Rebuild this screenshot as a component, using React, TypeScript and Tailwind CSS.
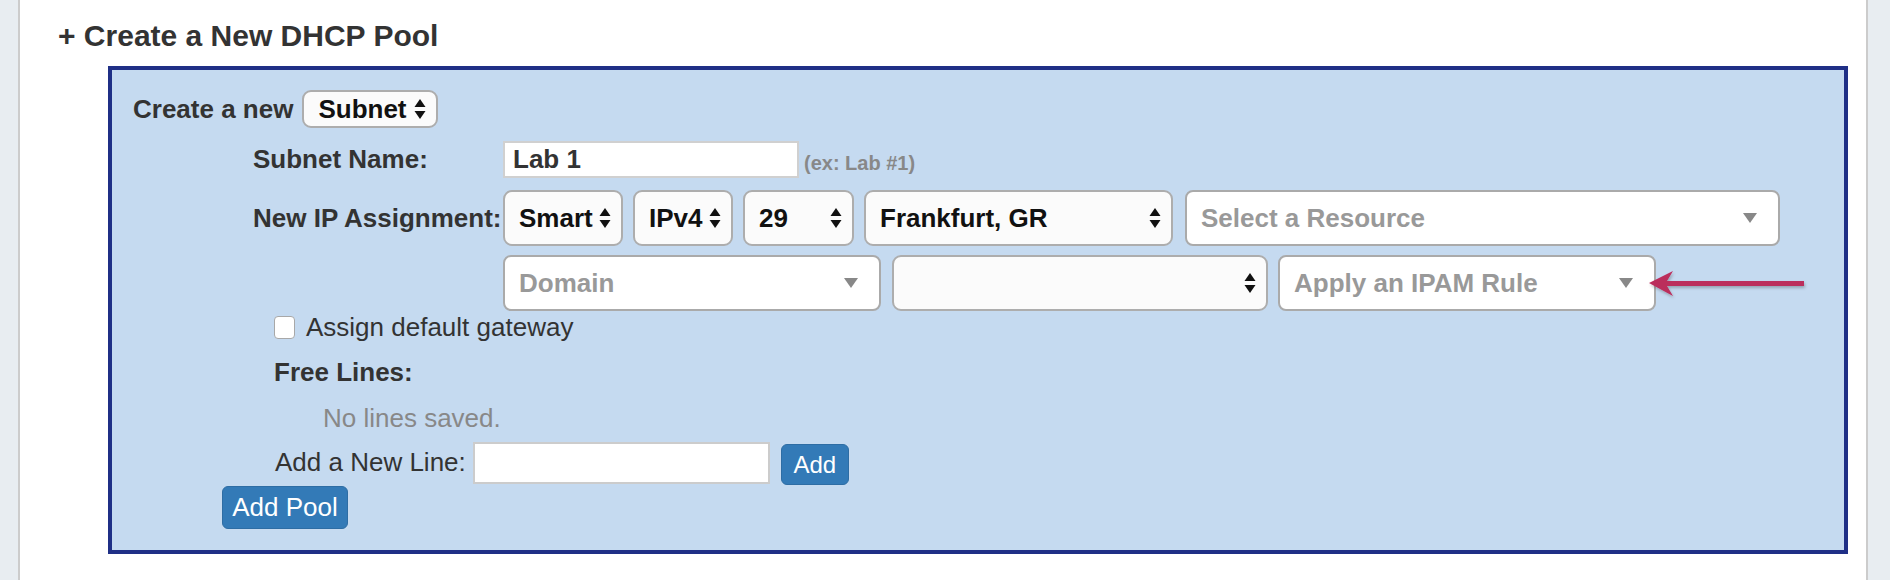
import type { ReactNode } from "react";

function UpDown() {
  return (
    <svg width="12" height="22" viewBox="0 0 12 22" className="shrink-0">
      <path d="M6 1 L11.5 9 H0.5 Z" fill="#111" />
      <path d="M6 21 L11.5 13 H0.5 Z" fill="#111" />
    </svg>
  );
}

function Caret() {
  return (
    <svg width="16" height="10" viewBox="0 0 16 10" className="shrink-0">
      <path d="M1 0 H15 L8 10 Z" fill="#888" />
    </svg>
  );
}

// native-looking select with stacked arrows
function NativeSelect({ children, className }: { children?: ReactNode; className: string }) {
  return (
    <div
      className={`flex items-center justify-between rounded-[9px] border-2 border-[#adadad] bg-[#fbfbfb] pl-[14px] pr-[10px] font-bold text-[26px] text-[#111] ${className}`}
    >
      <span>{children}</span>
      <UpDown />
    </div>
  );
}

// select2 style box with placeholder
function ComboBox({ placeholder, className }: { placeholder: string; className: string }) {
  return (
    <div
      className={`flex items-center justify-between rounded-[8px] border-2 border-[#aaa] bg-white pl-[14px] pr-[20px] font-bold text-[26px] text-[#999] ${className}`}
    >
      <span>{placeholder}</span>
      <Caret />
    </div>
  );
}

export default function App() {
  return (
    <div className="flex h-[580px] w-[1890px] font-['Liberation_Sans',Arial,sans-serif] text-[#333]">
      <div className="w-[20px] shrink-0 border-r-2 border-[#cccccc] bg-[#e8edf1]" />

      <div className="flex-1 bg-white pl-[38px] pr-[18px] pt-[18px]">
        <h2 className="text-[30px] font-bold leading-[36px] text-[#333]">+ Create a New DHCP Pool</h2>

        <div className="relative ml-[50px] mt-[12px] border-4 border-[#1f2f86] bg-[#c5daf0] pt-[20px] pb-[21px]">
          {/* Create a new */}
          <div className="flex h-[38px] items-center pl-[21px]">
            <span className="text-[26px] font-bold">Create a new</span>
            <NativeSelect className="ml-[9px] h-[38px] w-[136px] rounded-[8px] pl-[12px] pr-[8px]">Subnet</NativeSelect>
          </div>

          {/* Subnet Name */}
          <div className="mt-[13px] flex h-[37px] items-center pl-[141px]">
            <span className="w-[250px] text-[26px] font-bold">Subnet Name:</span>
            <div className="flex h-[37px] w-[296px] items-center border-2 border-[#d0d0d0] bg-white pl-[8px] text-[26px] font-bold text-[#333]">
              Lab 1
            </div>
            <span className="ml-[5px] mt-[6px] text-[20px] font-bold text-[#888]">(ex: Lab #1)</span>
          </div>

          {/* New IP Assignment */}
          <div className="mt-[12px] flex h-[56px] items-center pl-[141px]">
            <span className="w-[250px] text-[26px] font-bold">New IP Assignment:</span>
            <div className="flex gap-[10px]">
              <NativeSelect className="h-[56px] w-[120px]">Smart</NativeSelect>
              <NativeSelect className="h-[56px] w-[100px]">IPv4</NativeSelect>
              <NativeSelect className="h-[56px] w-[111px]">29</NativeSelect>
              <NativeSelect className="h-[56px] w-[309px]">Frankfurt, GR</NativeSelect>
              <ComboBox placeholder="Select a Resource" className="ml-[2px] h-[56px] w-[595px]" />
            </div>
          </div>

          <div className="mt-[9px] flex h-[56px] gap-[10px] pl-[391px]">
            <ComboBox placeholder="Domain" className="h-[56px] w-[378px]" />
            <NativeSelect className="ml-[1px] h-[56px] w-[376px] bg-[#f7f7f7]" />
            <ComboBox placeholder="Apply an IPAM Rule" className="h-[56px] w-[378px]" />
          </div>

          {/* gateway */}
          <div className="mt-[2px] flex h-[28px] items-center pl-[162px]">
            <span className="h-[23px] w-[21px] rounded-[4px] border border-[#a8a8a8] bg-white" />
            <span className="ml-[11px] text-[26px]">Assign default gateway</span>
          </div>

          <div className="mt-[17px] flex h-[28px] items-center pl-[162px] text-[26px] font-bold">Free Lines:</div>

          <div className="mt-[18px] flex h-[28px] items-center pl-[211px] text-[26px] text-[#888]">No lines saved.</div>

          <div className="mt-[8px] flex h-[45px] items-center pl-[163px]">
            <span className="text-[26px]">Add a New Line:</span>
            <div className="ml-[7px] h-[42px] w-[297px] border-2 border-[#cccccc] bg-white" />
            <button className="ml-[11px] mt-[4px] flex h-[41px] w-[68px] items-center justify-center rounded-[6px] border border-[#2e6da4] bg-[#337ab7] text-[24px] text-white">
              Add
            </button>
          </div>

          <div className="mt-[1px] pl-[110px]">
            <button className="flex h-[43px] w-[126px] items-center justify-center rounded-[6px] border border-[#2e6da4] bg-[#337ab7] text-[26px] text-white">
              Add Pool
            </button>
          </div>

          {/* annotation arrow */}
          <svg
            className="absolute left-[1535px] top-[198px]"
            width="162"
            height="32"
            viewBox="0 0 162 32"
          >
            <defs>
              <filter id="sh" x="-5%" y="-30%" width="110%" height="160%">
                <feDropShadow dx="1" dy="2" stdDeviation="1.5" floodColor="#000" floodOpacity="0.25" />
              </filter>
            </defs>
            <g filter="url(#sh)">
              <path d="M2 15 L26 3 L20 13 H157 V18 H20 L26 28 Z" fill="#bb2d5c" />
            </g>
          </svg>
        </div>
      </div>

      <div className="w-[24px] shrink-0 border-l-2 border-[#cccccc] bg-[#e8edf1]" />
    </div>
  );
}
